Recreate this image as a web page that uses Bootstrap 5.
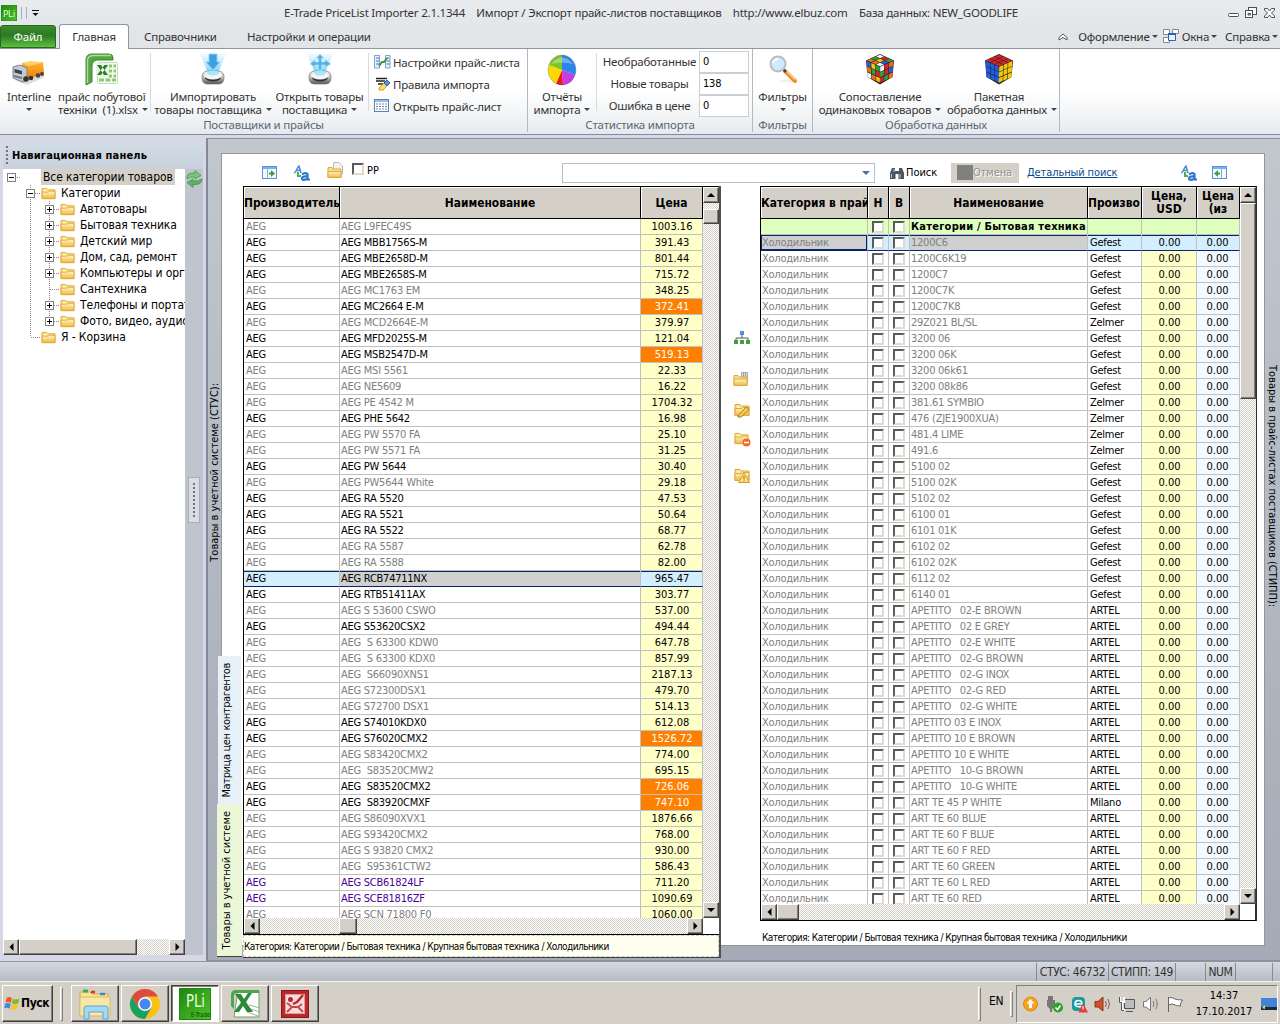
<!DOCTYPE html>
<html lang="ru">
<head>
  <meta charset="UTF-8" />
  <meta name="viewport" content="width=device-width, initial-scale=1" />
  <title>E-Trade PriceList Importer</title>
  <link href="https://cdn.jsdelivr.net/npm/bootstrap@5.3.0/dist/css/bootstrap.min.css" rel="stylesheet" />
  <style>
    body { width: 1280px; height: 1024px; overflow: hidden; background: #d4d0c8; color: #000; font: 11px/15px "DejaVu Sans Condensed", "DejaVu Sans", sans-serif; font-stretch: condensed; }
    svg { display: block; flex: none; }
    .ui-font { font-family: "Noto Sans", "Open Sans", sans-serif; font-stretch: normal; font-size: 11.5px; letter-spacing: -.22px; color: #333; white-space: nowrap; }
    .caret { display: inline-block; border: 3px solid transparent; border-top-color: #444; border-bottom: 0; vertical-align: 3px; margin-left: 4px; }

    /* title and ribbon tabs */
    .titlebar { height: 25px; background: linear-gradient(#e9ebee, #e4e7ea); padding: 0 4px 0 1px; }
    .title-text { width: 734px; margin-left: 243px; }
    .tabs-row { height: 24px; background: #e1e5e8; border-bottom: 1px solid #8b97a3; }
    .tab-file { width: 56px; height: 23px; background: linear-gradient(#3d8a2c, #2c7a24 45%, #5cc03c); border: 1px solid #1f6d1c; border-radius: 3px 3px 0 0; color: #fff; line-height: 22px; }
    .tab-main { width: 70px; height: 25px; margin: -1px 0 -1px 3px; background: #fff; border: 1px solid #8b97a3; border-bottom: 0; border-radius: 3px 3px 0 0; line-height: 24px; }
    .ribbon { height: 86px; background: linear-gradient(#fff 50%, #eceff2 90%, #e5e8ec); border-bottom: 1px solid #838d97; }
    .rgroup { border-right: 1px solid #b4b9c0; height: 83px; flex: none; }
    .rgroup-items { height: 69px; }
    .rgroup-items > * { flex: none; }
    .rgroup-title { line-height: 13px; color: #5c6670; text-align: center; }
    .rbtn { text-align: center; line-height: 13px; padding-top: 4px; }
    .rbtn svg { margin: 0 auto 3px; height: 34px; }
    .rsep { width: 1px; height: 58px; margin-top: 4px; background: #d9dcdf; }
    .rline { height: 22px; gap: 2px; }
    .rinput { width: 50px; height: 22px; border: 1px solid #ccced2; background: #fff; color: #000; line-height: 20px; padding-left: 3px; font-family: "DejaVu Sans Condensed", "DejaVu Sans"; font-size: 11px; }

    /* classic controls */
    .raised { background: #d4d0c8; border: 1px solid; border-color: #fff #404040 #404040 #fff; box-shadow: inset -1px -1px #808080; }
    .track { background: repeating-conic-gradient(#fff 0 25%, #d4d0c8 0 50%) 0 0 / 2px 2px; }
    .sb-btn { width: 16px; height: 16px; flex: none; display: flex; align-items: center; justify-content: center; }
    .cbx { display: inline-block; width: 12px; height: 12px; border: 2px solid; border-color: #5a5a5a #dedbd5 #dedbd5 #5a5a5a; background: #fff; flex: none; }

    /* navigation */
    .workspace { height: 826px; background: #d8d7e6; }
    .nav-side { width: 203px; padding: 6px 0 6px 3px; }
    .nav-head { height: 28px; background: linear-gradient(#d3dde6, #c8d1dc); font-weight: bold; padding-left: 3px; letter-spacing: .17px; }
    .grip { width: 2px; height: 19px; margin-right: 4px; background: repeating-linear-gradient(#6d7480 0 2px, transparent 2px 4px); }
    .tree { width: 182px; height: 770px; background: #fff; overflow: hidden; white-space: nowrap; font-size: 12px; letter-spacing: -.1px; }
    .tree-row { height: 16px; line-height: 16px; }
    .tcell { width: 19px; height: 16px; flex: none; display: flex; align-items: center; justify-content: center; }
    .tcell.v { background: repeating-linear-gradient(#888 0 1px, transparent 1px 2px) 9px 0 / 1px 16px no-repeat; }
    .tcell.h { background: repeating-linear-gradient(90deg, #888 0 1px, transparent 1px 2px) 10px 8px / 10px 1px no-repeat; }
    .tcell.vh { background: repeating-linear-gradient(#888 0 1px, transparent 1px 2px) 9px 0 / 1px 16px no-repeat, repeating-linear-gradient(90deg, #888 0 1px, transparent 1px 2px) 10px 8px / 10px 1px no-repeat; }
    .tcell.end { background: repeating-linear-gradient(#888 0 1px, transparent 1px 2px) 9px 0 / 1px 8px no-repeat, repeating-linear-gradient(90deg, #888 0 1px, transparent 1px 2px) 10px 8px / 10px 1px no-repeat; }
    .side-strip { width: 18px; background: #c0c4ce; }

    /* mdi area */
    .mdi { margin-top: 3px; height: 823px; width: 1074px; border: 1px solid #8b909a; border-left: 2px solid #82879a; border-right: 0; background: linear-gradient(#c0c7cd, #b0b6c0 60%, #a4abb6); }
    .vtext { writing-mode: vertical-rl; white-space: nowrap; line-height: 14px; }
    .up { transform: rotate(180deg); }
    .page { width: 1044px; height: 793px; margin-top: 14px; background: #fff; border: 1px solid #969696; }
    .page-tools { height: 32px; }
    .combo { width: 313px; height: 20px; border: 1px solid #bcbcbc; border-right-color: #a9c4e6; }
    .btn-cancel { width: 68px; height: 20px; background: #d4d0c8; color: #909090; text-shadow: 1px 1px #fff; letter-spacing: -.1px; }
    .side-tabs { width: 21px; height: 772px; }
    .side-tab { position: relative; margin-left: -5px; width: 25px; color: #000; padding-right: 5px; }
    .pane-left { width: 478px; height: 772px; border-right: 2px solid #505050; border-bottom: 1px solid #404040; background: #fff; }
    .gridbox { border: 1px solid #000; border-right: 0; background: #fff; }
    .grid-view { overflow: hidden; flex: none; }
    .goods { table-layout: fixed; border-collapse: separate; border-spacing: 0; white-space: nowrap; line-height: 15px; }
    .goods th { height: 32px; padding: 1px 0 0; background: #d4d0c8; border-right: 1px solid #000; border-bottom: 1px solid #000; box-shadow: inset 1px 1px #fff; text-align: center; overflow: hidden; line-height: 13px; font-size: 11.9px; }
    .goods td { height: 16px; padding: 0 0 0 1px; border-right: 1px solid #c0c0c0; border-bottom: 1px solid #c0c0c0; overflow: hidden; letter-spacing: -.25px; }
    .goods td.maker { padding-left: 2px; }
    .goods .cb { padding: 0; text-align: center; line-height: 0; }
    .goods .num { text-align: center; background: #ffffc8; letter-spacing: 0; }
    .goods .num2 { text-align: center; background: #f3faff; letter-spacing: 0; padding-right: 2px; }
    .goods .dim { color: #808080; }
    .goods .violet { color: #4b0096; }
    .goods .hot { background: #ff8000; color: #fff; }
    .goods .cat td { background: #dfffbf; letter-spacing: .24px; }
    .goods .sel td { background: #d3eefe; border-bottom-color: #0a246a; box-shadow: inset 0 1px #0a246a; }
    .goods .sel td.shade { background: #d0d0d0; }
    .goods .sel td.shade:first-child { box-shadow: inset 1px 1px #0a246a, inset -1px -1px #0a246a; }
    .foot-left { height: 22px; background: #fffff0; border: 1px dashed #c8c8c8; line-height: 22px; }
    .foot-text { font-size: 10px; letter-spacing: -.54px; white-space: nowrap; }
    .mid-tools { width: 39px; padding-left: 13px; }

    /* status bar and taskbar */
    .statusbar { height: 21px; background: linear-gradient(#d5d9e0, #b6bcc4); border-top: 1px solid #8e96a5; border-bottom: 1px solid #f4f3f0; font-size: 12px; letter-spacing: -.4px; color: #333; }
    .scell { height: 18px; border-left: 1px solid #858b95; line-height: 18px; text-align: center; }
    .taskbar { height: 42px; background: #d4d0c8; padding: 3px 2px 2px; }
    .task { width: 48px; height: 37px; display: flex; align-items: center; justify-content: center; }
    .task-on { background: #fff; border: 1px solid; border-color: #404040 #fff #fff #404040; box-shadow: inset 1px 1px #808080; }
    .tdiv { width: 3px; height: 34px; border: 1px solid; border-color: #fff #808080 #808080 #fff; }
    .tray { width: 262px; height: 38px; border: 1px solid; border-color: #808080 #fff #fff #808080; }
  </style>
</head>
<body class="d-flex flex-column">

  <!-- Shared icons -->
  <svg width="0" height="0" style="position:absolute">
    <defs>
      <linearGradient id="gFold" x2="0" y2="1"><stop offset="0" stop-color="#fff6c8" /><stop offset="1" stop-color="#f0b93a" /></linearGradient>
      <linearGradient id="gBeam" x2="0" y2="1"><stop offset="0" stop-color="#dff3fd" stop-opacity=".5" /><stop offset="1" stop-color="#6cd0f8" /></linearGradient>
      <linearGradient id="gChrome" x2="0" y2="1"><stop offset="0" stop-color="#f4f4f4" /><stop offset=".5" stop-color="#bbb" /><stop offset="1" stop-color="#555" /></linearGradient>
      <linearGradient id="gGreen" x2="1" y2="1"><stop offset="0" stop-color="#23860f" /><stop offset="1" stop-color="#4ec22c" /></linearGradient>
      <linearGradient id="gTruck" x2="0" y2="1"><stop offset="0" stop-color="#ffb52c" /><stop offset="1" stop-color="#ef7c08" /></linearGradient>
      <symbol id="folder" viewBox="0 0 16 14"><path d="M1 12.5V1.5H6L7.5 3H15V12.5Z" fill="#fbe08a" stroke="#e3a83c" /><path d="M1 5.5H8L9 4.5H15V12.5H1Z" fill="url(#gFold)" stroke="#e3a83c" /><path d="M3 4H6" stroke="#fff" /></symbol>
      <symbol id="sorticon" viewBox="0 0 16 16"><path d="M0 8C3 7 3 2 5 1L7 8M1.5 5.5H7" fill="none" stroke="#4d8fd6" stroke-width="1.6" /><path d="M4 7V11H7" fill="none" stroke="#52b04a" stroke-width="2" /><path d="M8 9.5Q11 7 13.5 9V14.5H16M13 11.5Q8 11 8 13.5T13 14" fill="none" stroke="#2f74d0" stroke-width="2.2" /></symbol>
      <symbol id="beambase" viewBox="0 0 34 34"><path d="M4 1H30L22 20H12Z" fill="url(#gBeam)" /><path d="M6 24Q6 19 11 18H23Q28 19 28 24Q28 31 23 31H11Q6 31 6 24Z" fill="url(#gChrome)" stroke="#777" stroke-width=".7" /><ellipse cx="17" cy="24.5" rx="8" ry="4" fill="#333" /><ellipse cx="17" cy="22.5" rx="9" ry="4" fill="#f5f5f5" /><ellipse cx="17" cy="20" rx="6" ry="2.5" fill="#a8e6fc" /></symbol>
      <symbol id="pli" viewBox="0 0 32 32"><rect width="32" height="32" fill="#178a10" /><rect x="1" y="1" width="30" height="30" fill="url(#gGreen)" /></symbol>
    </defs>
  </svg>

  <!-- Title bar -->
  <div class="titlebar d-flex align-items-center ui-font">
    <svg width="16" height="16" viewBox="0 0 16 16"><use href="#pli" /><text x="2" y="12" font-size="9.5" fill="#dfffcf" font-family="DejaVu Sans Condensed" textLength="12" lengthAdjust="spacingAndGlyphs">PLi</text></svg>
    <svg width="24" height="14" viewBox="0 0 24 14"><path d="M4.500 1V13M9.500 1V13" stroke="#aab" /><path d="M15 4.500H22" stroke="#111" /><path d="M15.500 7H21.500L18.500 10Z" fill="#111" /></svg>
    <div class="title-text d-flex justify-content-between"><span>E-Trade PriceList Importer 2.1.1344</span><span>Импорт / Экспорт прайс-листов поставщиков</span><span>http://www.elbuz.com</span><span>База данных: NEW_GOODLIFE</span></div>
    <svg class="ms-auto" width="50" height="14" viewBox="0 0 50 14" fill="#fff" stroke="#4a4f58"><rect x="2.500" y="7.500" width="10" height="3" rx="1" /><rect x="22.500" y="1.500" width="8" height="7" /><rect x="19.500" y="4.500" width="7" height="7" /><path d="M22 7.500H24.500V9H22Z" /><path d="M38.500 2.500H41.500L43.500 5L45.500 2.500H48.500V4L45.500 7L48.500 10V11.500H45.500L43.500 9L41.500 11.500H38.500V10L41.500 7L38.500 4Z" /></svg>
  </div>

  <!-- Ribbon tabs -->
  <div class="tabs-row d-flex ui-font">
    <div class="tab-file text-center">Файл</div>
    <div class="tab-main text-center">Главная</div>
    <div class="d-flex align-items-center"><span style="width:103px;margin-left:15px">Справочники</span><span>Настройки и операции</span></div>
    <div class="ms-auto d-flex align-items-center" style="padding-right:2px">
      <svg width="10" height="8" viewBox="0 0 10 8"><path d="M1 4.500L5 1L9 4.500V7L5 4.500L1 7Z" fill="#fff" stroke="#555" /></svg>
      <span style="margin-left:10px">Оформление<i class="caret" style="margin-left:2px"></i></span>
      <svg style="margin:0 3px 0 5px" width="16" height="15" viewBox="0 0 16 15" fill="#fff"><path d="M.5 .5H6.500V5.500H.5ZM9.500 .5H15.500V4.500H9.500ZM.5 8.500H6.500V13.500H.5Z" stroke="#888" /><path d="M5.500 4.500H12.500V11.500H5.500Z" fill="#eaf1fb" stroke="#2c62b4" /><path d="M5 5H13" stroke="#2c62b4" stroke-width="2" /></svg>
      <span>Окна<i class="caret" style="margin-left:2px"></i></span><span style="margin-left:8px">Справка<i class="caret" style="margin-left:2px"></i></span>
    </div>
  </div>

  <!-- Ribbon -->
  <div class="ribbon d-flex ui-font">
    <div class="rgroup" style="width:528px">
      <div class="rgroup-items d-flex">
        <div class="rbtn" style="width:58px">
          <svg width="34" viewBox="0 0 34 34"><path d="M2 27L15 32L33 24L30 22Z" fill="#0002" /><path d="M10 10L31 9L32 20L17 26L10 22Z" fill="url(#gTruck)" /><path d="M10 10L17 13L32 9.500L18 8Z" fill="#ffcf62" /><path d="M1 14L8 12L15 15V27L11 29L1 25Z" fill="#c3cad2" stroke="#78818c" /><path d="M2.500 16L10 18V21.500L2.500 19.500Z" fill="#39424f" /><path d="M2 22L10 24V26L2 24Z" fill="#69727e" /><circle cx="14" cy="26" r="2.800" fill="#333" /><circle cx="19" cy="25" r="2.300" fill="#333" /><circle cx="26" cy="22.500" r="2.300" fill="#444" /><circle cx="30" cy="21" r="2" fill="#444" /></svg>
          Interline<br><i class="caret m-0"></i>
        </div>
        <div class="rbtn" style="width:87px">
          <svg width="34" viewBox="0 0 34 34"><rect x="12.500" y="9.500" width="20" height="21" rx="1" fill="#f6fbf3" stroke="#c5dcbc" /><path d="M22 13H31M22 18H31M22 23H31M14 27H31" stroke="#8ecb70" stroke-width="3" stroke-dasharray="5 1.500" /><path d="M1 32V7Q1 1 7 1H24Q28 1 28 5V7H12Q7 8 7 13V29Z" fill="#57a544" stroke="#3c8a2e" /><path d="M2.500 30V7Q3 3 8 2.500H26" fill="none" stroke="#a9dc93" stroke-width="1.500" /><path d="M11 10H24V25L11 23Z" fill="#e9f5e3" /><path d="M12 12H16L23 22H19ZM23 12H19.500L12 22H16Z" fill="#2f7d2b" /></svg>
          прайс побутової<br>техніки&nbsp; (1).xlsx<i class="caret"></i>
        </div>
        <div class="rsep" style="margin-left:5px"></div>
        <div class="rbtn" style="width:122px;margin-left:1px">
          <svg width="34" viewBox="0 0 34 34"><use href="#beambase" /><path d="M13 1H21V9H24L17 17L10 9H13Z" fill="#3d9fe0" stroke="#8fd0f6" /></svg>
          Импортировать<br>товары поставщика<i class="caret"></i>
        </div>
        <div class="rbtn" style="width:91px">
          <svg width="34" viewBox="0 0 34 34"><use href="#beambase" /><path d="M17 1L21 5.500H18.500V9H22V6.500L28 11L22 14V12H18.500V17H15.500V12H12V14L7 11L12 6.500V9H15.500V5.500H13Z" fill="#55b2e8" stroke="#b8e4fa" stroke-width=".6" /></svg>
          Открыть товары<br>поставщика<i class="caret"></i>
        </div>
        <div class="rsep" style="margin-left:3px"></div>
        <div style="margin:2px 0 0 5px">
          <div class="rline d-flex align-items-center"><svg width="17" height="16" viewBox="0 0 17 16"><path d="M.5 1.500H5.500V14H.5ZM11.500 1.500H16V14H11.500Z" fill="#e8f1fb" stroke="#7da3d3" /><path d="M2 4H5M2 7H5M2 10H5M12.500 4H15.500M12.500 7H15.500M12.500 10H15.500" stroke="#4a79b7" /><path d="M5 12L8 8L10 8L13 4" fill="none" stroke="#3b9a3b" stroke-width="2" /></svg><span>Настройки прайс-листа</span></div>
          <div class="rline d-flex align-items-center"><svg width="17" height="16" viewBox="0 0 17 16"><path d="M2 2.500H13M2 5H11M4 8H9" stroke="#222" stroke-width="1.300" /><path d="M5 12L10 7L13 10L9 14H5Z" fill="#fbd968" stroke="#d99b28" /><path d="M10 7L13 4L16 7L13 10Z" fill="#5d93dc" stroke="#2e5fa8" /></svg><span>Правила импорта</span></div>
          <div class="rline d-flex align-items-center"><svg width="17" height="14" viewBox="0 0 17 14"><rect x=".5" y=".5" width="14" height="12" fill="#fff" stroke="#5a82b8" /><path d="M1 2H14" stroke="#9dbce4" stroke-width="2" /><path d="M2 5H13M2 7.500H13M2 10H13" stroke="#6f87a7" stroke-width="1.200" stroke-dasharray="2 1" /></svg><span>Открыть прайс-лист</span></div>
        </div>
      </div>
      <div class="rgroup-title">Поставщики и прайсы</div>
    </div>
    <div class="rgroup" style="width:225px">
      <div class="rgroup-items d-flex">
        <div class="rbtn" style="width:68px">
          <svg width="34" viewBox="-17 -17 34 34"><path d="M0 0V-15A14 15 0 0 1 13 5Z" fill="#2a86e8" /><path d="M0 0L13 5A14 15 0 0 1 1 15Z" fill="#c63ce8" /><path d="M0 0L1 15A14 15 0 0 1-6 13.500Z" fill="#e81c1c" /><path d="M0 0L-6 13.500A14 15 0 0 1-13-5Z" fill="#ffd800" /><path d="M0 0L-13-5A14 15 0 0 1 0-15Z" fill="#7cc42a" /><ellipse rx="14" ry="15" fill="none" stroke="#0003" /><path d="M-11-6Q0-19 11-6Q0-9-11-6Z" fill="#fff5" /></svg>
          Отчёты<br>импорта<i class="caret"></i>
        </div>
        <div class="rsep" style="margin-right:3px"></div>
        <div class="text-center" style="width:99px;padding-top:2px"><div class="rline" style="line-height:22px">Необработанные</div><div class="rline" style="line-height:22px">Новые товары</div><div class="rline" style="line-height:22px">Ошибка в цене</div></div>
        <div style="padding-top:2px"><div class="rinput">0</div><div class="rinput">138</div><div class="rinput">0</div></div>
      </div>
      <div class="rgroup-title">Статистика импорта</div>
    </div>
    <div class="rgroup" style="width:60px">
      <div class="rgroup-items">
        <div class="rbtn">
          <svg width="34" viewBox="0 0 34 34"><path d="M12 28Q22 31 30 28L24 26Z" fill="#0001" /><path d="M19 18L29 28" stroke="#e8922c" stroke-width="4" stroke-linecap="round" /><path d="M20 17.500L29 26.500" stroke="#ffd28a" stroke-width="1.200" /><path d="M16 15L20 19" stroke="#444" stroke-width="2.500" /><circle cx="12" cy="11" r="7.500" fill="#cfeafa" stroke="#b5bcc4" stroke-width="2" /><path d="M7 10Q8 6 12 6" stroke="#fff" stroke-width="2" fill="none" /></svg>
          Фильтры<br><i class="caret m-0"></i>
        </div>
      </div>
      <div class="rgroup-title">Фильтры</div>
    </div>
    <div class="rgroup" style="width:247px">
      <div class="rgroup-items d-flex">
        <div class="rbtn" style="width:134px"><svg width="34" viewBox="-3 -1 34 34" id="cube-mixed"></svg>Сопоставление<br>одинаковых товаров<i class="caret"></i></div>
        <div class="rbtn" style="width:104px"><svg width="34" viewBox="-3 -1 34 34" id="cube-solved"></svg>Пакетная<br>обработка данных<i class="caret"></i></div>
      </div>
      <div class="rgroup-title">Обработка данных</div>
    </div>
  </div>

  <!-- Workspace -->
  <div class="workspace d-flex">
    <div class="nav-side">
      <div class="nav-head d-flex align-items-center"><span class="grip"></span>Навигационная панель</div>
      <div class="d-flex">
        <div>
          <div class="tree" id="tree"></div>
          <div class="track d-flex" style="width:182px;height:16px"><div class="raised sb-btn"><svg width="5" height="8"><path d="M4.500 0V8L.5 4Z" /></svg></div><div class="raised" style="width:118px"></div><div class="raised sb-btn ms-auto"><svg width="5" height="8"><path d="M.5 0V8L4.500 4Z" /></svg></div></div>
        </div>
        <div class="side-strip">
          <svg width="18" height="20" viewBox="0 0 18 20"><path d="M2 10Q1 4 8 4H10V1.500L16 6.500L10 10V8Q5 7.500 2 10Z" fill="#7cc47a" stroke="#3f9a4a" stroke-width=".8" /><path d="M17 10Q17 15.500 10 15.500H8V18.500L2 13.500L8 10V12Q13 12.500 17 10Z" fill="#5db164" stroke="#3f9a4a" stroke-width=".8" /></svg>
          <div class="d-flex align-items-center justify-content-center" style="width:12px;height:46px;margin:288px 0 0 3px;background:#dcdde4;border:1px solid #aaaebb"><span class="grip m-0" style="height:34px"></span></div>
        </div>
      </div>
    </div>
    <div style="width:3px"></div>

    <div class="mdi d-flex">
      <div class="d-flex align-items-center" style="width:13px"><span class="vtext up" style="margin-top:-154px">Товары в учетной системе (СТУС):</span></div>

      <div class="page">
        <!-- Search and tools row -->
        <div class="page-tools d-flex align-items-center" style="padding-top:5px">
          <svg style="margin-left:40px" width="15" height="13" viewBox="0 0 15 13"><rect x=".5" y=".5" width="14" height="12" fill="#f4f9ff" stroke="#5a93d0" /><path d="M1 2H14" stroke="#79b1ec" stroke-width="2" /><path d="M5.500 3V12" stroke="#79b1ec" /><path d="M7 6.500H9V4L13 7.500L9 11V8.500H7Z" fill="#3f9d3f" /></svg>
          <svg style="margin-left:17px" width="16" height="16"><use href="#sorticon" /></svg>
          <svg style="margin-left:17px;margin-top:-4px" width="17" height="17" viewBox="0 0 17 17"><path d="M6.500 .5H12L15.500 4V12H6.500Z" fill="#f3f3f3" stroke="#bbb" /><path d="M1 15.500V5.500H5L6 7H14V15.500Z" fill="#fbe08a" stroke="#e3a83c" /><path d="M1 9.500H14V15.500H1Z" fill="url(#gFold)" stroke="#e3a83c" /></svg>
          <span class="cbx" style="margin:-7px 3px 0 8px"></span><span style="margin-top:-5px">PP</span>
          <div class="combo d-flex align-items-center" style="margin-left:183px"><i class="caret ms-auto me-1" style="border-width:4px 4px 0;border-top-color:#4a6ea8"></i></div>
          <svg style="margin-left:15px" width="14" height="14" viewBox="0 0 14 14"><path d="M2 2H5V5H9V2H12L14 7V13H8.500V8H5.500V13H0V7Z" fill="#4a5560" /><path d="M1.500 8V12M10 8V12M4 3V6" stroke="#b5c5d5" /></svg>
          <span style="margin-left:2px;width:45px">Поиск</span>
          <div class="btn-cancel d-flex align-items-center"><span style="width:16px;height:15px;margin-left:6px;background:#808080"></span>Отмена</div>
          <a href="#" style="margin-left:8px;color:#0a4a90;letter-spacing:-.1px">Детальный поиск</a>
          <svg style="margin-left:auto" width="16" height="16"><use href="#sorticon" /></svg>
          <svg style="margin:0 37px 0 15px" width="15" height="13" viewBox="0 0 15 13"><rect x=".5" y=".5" width="14" height="12" fill="#f4f9ff" stroke="#5a93d0" /><path d="M1 2H14" stroke="#79b1ec" stroke-width="2" /><path d="M9.500 3V12" stroke="#79b1ec" /><path d="M8 8.500H6V11L2 7.500L6 4V6.500H8Z" fill="#3f9d3f" /></svg>
        </div>

        <div class="d-flex">
          <div class="side-tabs">
            <div class="side-tab d-flex align-items-center justify-content-center" style="margin-top:470px;height:148px;background:#e8f1f7;width:23px;margin-left:-4px"><span class="vtext up" style="letter-spacing:-.37px">Матрица цен контрагентов</span></div>
            <div class="side-tab d-flex align-items-center justify-content-center" style="height:153px;background:#ecf7d8;border-bottom:1px solid #404040"><span class="vtext up">Товары в учетной системе</span></div>
          </div>
          <div class="pane-left">
            <div class="gridbox" style="height:749px">
              <div class="d-flex">
                <div class="grid-view" style="width:459px;height:731px">
                  <table class="goods" style="width:459px">
                    <colgroup><col style="width:96px"><col style="width:301px"><col style="width:62px"></colgroup>
                    <thead><tr><th>Производитель</th><th>Наименование</th><th>Цена</th></tr></thead>
                    <tbody id="goods-own"></tbody>
                  </table>
                </div>
                <div class="track d-flex flex-column" style="width:16px;height:731px"><div class="raised sb-btn"><svg width="8" height="4"><path d="M0 4H8L4 0Z" /></svg></div><div class="raised" style="height:15px;margin-top:6px"></div><div class="raised sb-btn mt-auto"><svg width="8" height="4"><path d="M0 0H8L4 4Z" /></svg></div></div>
              </div>
              <div class="track d-flex" style="width:459px;height:16px"><div class="raised sb-btn"><svg width="5" height="8"><path d="M4.500 0V8L.5 4Z" /></svg></div><div class="raised" style="width:18px;margin-left:79px"></div><div class="raised sb-btn ms-auto"><svg width="5" height="8"><path d="M.5 0V8L4.500 4Z" /></svg></div></div>
            </div>
            <div class="foot-left foot-text">Категория: Категории / Бытовая техника / Крупная бытовая техника / Холодильники</div>
          </div>
          <div class="mid-tools">
            <svg style="margin-top:145px" width="16" height="14" viewBox="0 0 16 14"><rect x="6" width="4" height="4" fill="#4f8fe0" /><path d="M8 4V7M2 9V7H14V9" fill="none" stroke="#555" /><path d="M0 9H4V13H0ZM6 9H10V13H6ZM12 9H16V13H12Z" fill="#3da03a" /></svg>
            <svg style="margin-top:25px;margin-left:-1px" width="17" height="17" viewBox="0 0 17 17"><path d="M8.500 2.500H14.500V12H8.500Z" fill="#ddd" stroke="#aaa" /><path d="M10.500 3V8M12.500 3V8" stroke="#999" /><path d="M1 15.500V5.500H5L6 7H14V15.500Z" fill="#fbe08a" stroke="#e3a83c" /><path d="M1 9H14V15.500H1Z" fill="url(#gFold)" stroke="#e3a83c" /></svg>
            <svg style="margin-top:16px" width="17" height="15" viewBox="0 0 17 15"><use href="#folder" width="16" height="14" /><path d="M4 13L12 4L15 6.500L7 14H4Z" fill="#f6cc58" stroke="#a8781c" /></svg>
            <svg style="margin-top:14px" width="17" height="15" viewBox="0 0 17 15"><use href="#folder" width="15" height="13" /><circle cx="12.500" cy="10.500" r="4" fill="#ee6a2c" /><path d="M10 10.500H15" stroke="#fff" stroke-width="1.500" /></svg>
            <svg style="margin-top:21px" width="17" height="15" viewBox="0 0 17 15"><use href="#folder" width="16" height="14" /><path d="M10 5L15.500 14.500H4.500Z" fill="#ffe37a" stroke="#d79a20" /><path d="M10 8V11.500M10 12.500V13.500" stroke="#765" /></svg>
          </div>
          <div style="width:497px">
            <div class="gridbox" style="height:735px;border-right:2px solid #303030">
              <div class="d-flex">
                <div class="grid-view" style="width:479px;height:717px">
                  <table class="goods" style="width:479px">
                    <colgroup><col style="width:107px"><col style="width:21px"><col style="width:21px"><col style="width:178px"><col style="width:54px"><col style="width:55px"><col style="width:43px"></colgroup>
                    <thead><tr><th class="text-start">Категория в прай</th><th>Н</th><th>В</th><th>Наименование</th><th class="text-start">Произво</th><th>Цена,<br>USD</th><th>Цена<br>(из</th></tr></thead>
                    <tbody id="goods-price"></tbody>
                  </table>
                </div>
                <div class="track d-flex flex-column" style="width:16px;height:717px"><div class="raised sb-btn"><svg width="8" height="4"><path d="M0 4H8L4 0Z" /></svg></div><div class="raised" style="height:196px"></div><div class="raised sb-btn mt-auto"><svg width="8" height="4"><path d="M0 0H8L4 4Z" /></svg></div></div>
              </div>
              <div class="track d-flex" style="width:479px;height:16px"><div class="raised sb-btn"><svg width="5" height="8"><path d="M4.500 0V8L.5 4Z" /></svg></div><div class="raised" style="width:22px"></div><div class="raised sb-btn ms-auto"><svg width="5" height="8"><path d="M.5 0V8L4.500 4Z" /></svg></div></div>
            </div>
            <div class="foot-text" style="padding:9px 0 0 2px">Категория: Категории / Бытовая техника / Крупная бытовая техника / Холодильники</div>
          </div>
        </div>
      </div>
      <div class="d-flex align-items-center" style="width:15px"><span class="vtext" style="margin-top:-126px">Товары в прайс-листах поставщиков (СТИПП):</span></div>
    </div>
  </div>

  <!-- Status bar -->
  <div class="statusbar d-flex justify-content-end align-items-center">
    <div class="scell" style="width:72px">СТУС: 46732</div><div class="scell" style="width:67px">СТИПП: 149</div><div class="scell" style="width:30px"></div><div class="scell" style="width:30px">NUM</div><div class="scell" style="width:37px"></div><div class="scell" style="width:8px"></div>
  </div>

  <!-- Taskbar -->
  <div class="taskbar d-flex align-items-center">
    <div class="raised d-flex align-items-center fw-bold" style="width:51px;height:37px;padding-left:1px;font-size:12px;letter-spacing:-.4px">
      <svg width="17" height="17" viewBox="0 0 16 16"><path d="M2.500 2.500Q5 1 7.500 3L6.500 7.500Q4 6 1.500 7Z" fill="#ee5a24" /><path d="M8.500 3.500Q11 5 14.500 3L13.500 7.500Q11 9.500 7.500 8Z" fill="#7fba28" /><path d="M1.200 8Q4 7 6.300 8.500L5.300 13Q3 11.500 .2 12.500Z" fill="#3a8ee0" /><path d="M7.300 9Q10 10.500 13.300 8.500L12.300 13Q9.500 15 6.300 13.500Z" fill="#fcc41c" /></svg>Пуск
    </div>
    <div class="tdiv" style="margin:0 8px 0 7px"></div>
    <div class="d-flex" style="gap:2px">
      <div class="raised task"><svg width="34" height="34" viewBox="0 0 34 34"><path d="M2 5H12L14 7H30V27H2Z" fill="#f8e49a" stroke="#cfa94a" /><path d="M5 4H10" stroke-width="3" stroke="#3fae3f" /><path d="M13 5H17" stroke="#d33" stroke-width="2.500" /><path d="M22 7H27" stroke="#38c" stroke-width="2.500" /><path d="M2 10H32V29H2Z" fill="#f9e8a5" stroke="#dcbb60" /><path d="M6 32V21Q6 19 8 19H28Q30 19 30 21V32H25V25H11V32Z" fill="#a5d8f2" stroke="#5ba6cf" /></svg></div>
      <div class="raised task"><svg width="32" height="32" viewBox="-16 -16 32 32"><circle r="15" fill="#fbc116" /><path d="M0 0L-13-7.500A15 15 0 0 1 13-7.500H0Z" fill="#dd4b3e" /><path d="M-13-7.500A15 15 0 0 0 0 15L6.500 3.500L-6.500 3.500Z" fill="#1aa15f" /><path d="M-13-7.500L-6 4L0 0L0-7.500H13Z" fill="#dd4b3e" /><circle r="7" fill="#fff" /><circle r="5.500" fill="#4587f3" /></svg></div>
      <div class="task-on task"><svg width="32" height="32" viewBox="0 0 32 32"><use href="#pli" /><text x="7" y="19" font-size="17" fill="#e4ffd8" font-family="DejaVu Sans Condensed" textLength="19" lengthAdjust="spacingAndGlyphs">PLi</text><text x="12" y="29" font-size="7" fill="#0a3a06" font-family="DejaVu Sans Condensed" textLength="19" lengthAdjust="spacingAndGlyphs">E-Trade</text></svg></div>
      <div class="raised task"><svg width="32" height="32" viewBox="0 0 32 32"><path d="M9 3H30V29H5Z" fill="#fff" stroke="#63a763" /><path d="M20 17L31 20M18 20L31 24M18 24L29 28" stroke="#9ab79a" /><path d="M2 7Q2 2 7 2H30V5H8Q5 5 5 8V21L2 18Z" fill="#4ea54e" /><path d="M6 6H12L15 11L19 5H23L17 14L24 24H18L14 18L10 24H5L12 14.500Z" fill="#2c8a38" /></svg></div>
      <div class="raised task"><svg width="30" height="30" viewBox="0 0 30 30"><rect x="1.500" y="1.500" width="27" height="27" fill="#b9282c" stroke="#8c1518" /><rect x="5.500" y="5.500" width="19" height="19" fill="#f6dcdc" stroke="#e89a9a" /><circle cx="10.500" cy="10.500" r="2.500" fill="#b9282c" /><path d="M23 6L17 13L13 15" fill="none" stroke="#b9282c" stroke-width="2.500" /><path d="M7 14L12 18L7 23M22 15L18 18L23 23M11 18H19" fill="none" stroke="#c54548" stroke-width="1.800" /></svg></div>
    </div>
    <div class="ms-auto tdiv"></div>
    <span style="margin:-4px 4px 0 8px;width:17px;font-size:12px;letter-spacing:-.3px">EN</span>
    <div class="tdiv" style="height:26px;margin-right:3px"></div>
    <div class="tray d-flex align-items-center">
      <svg style="margin-left:6px" width="162" height="20" viewBox="0 0 162 20">
        <circle cx="7.500" cy="10" r="7" fill="#f9a11c" stroke="#e4870c" /><path d="M7.500 5L11.500 9.500H9V14H6V9.500H3.500Z" fill="#fff" />
        <path d="M25 2H30V6H32V12L29 15V18H27V15L24 12V6H25Z" fill="#777" /><circle cx="35" cy="13.500" r="5" fill="#2aa52c" /><path d="M32.500 13.500L34.500 15.500L37.500 11.500" fill="none" stroke="#fff" stroke-width="1.500" />
        <rect x="49" y="3" width="13" height="14" rx="4" fill="#1b9aa0" /><path d="M52 10H59Q59 6.500 55.500 6.500T52 10T58.500 12.500" fill="none" stroke="#fff" stroke-width="1.600" /><path d="M60 9L65 18.500H55.500Z" fill="#e8403a" /><path d="M60 12V15.500" stroke="#fff" />
        <path d="M72 7.500H75L80 3V17L75 13H72Z" fill="#d4502c" stroke="#93341c" /><path d="M82.500 7Q84 10 82.500 13M85 5Q88 10 85 15" fill="none" stroke="#8a5547" />
        <path d="M101.500 5.500H111.500V14.500H101.500ZM103 17.500H110" fill="#b9bcc0" stroke="#555" /><path d="M97 3V8H101V3M99 8V16H102" fill="none" stroke="#fff" stroke-width="2" /><path d="M96.500 3V8.500H98.500V16.500H101" fill="none" stroke="#555" />
        <path d="M120.500 7.500H123L127.500 3.500V16.500L123 13H120.500Z" fill="#fff" stroke="#777" /><path d="M130 7Q132 10 130 13M132.500 5Q136 10 132.500 15" fill="none" stroke="#777" />
        <path d="M145.500 3V18M145.500 4Q149 2.500 152 5Q155 6 159.500 6Q157 9 157.500 12Q153 12 151 10.500Q148 9.500 145.500 11" fill="#fff" stroke="#666" />
      </svg>
      <div class="text-center" style="width:74px;line-height:16px;margin-left:2px">14:37<br>17.10.2017</div>
      <svg width="16" height="14" viewBox="0 0 16 14"><rect y="1" width="16" height="12" fill="#3f84d8" /><rect y="10" width="16" height="3" fill="#1a2840" /><path d="M1 11L4 8L4 12Z" fill="#f5d03c" /></svg>
    </div>
  </div>

  <script src="https://cdn.jsdelivr.net/npm/bootstrap@5.3.0/dist/js/bootstrap.bundle.min.js"></script>
  <script>
    // name | price | flags: d = dim, v = violet, h = highlighted price, s = selected
    const own = `AEG L9FEC49S|1003.16|d
AEG MBB1756S-M|391.43|
AEG MBE2658D-M|801.44|
AEG MBE2658S-M|715.72|
AEG MC1763 EM|348.25|d
AEG MC2664 E-M|372.41|h
AEG MCD2664E-M|379.97|d
AEG MFD2025S-M|121.04|
AEG MSB2547D-M|519.13|h
AEG MSI 5561|22.33|d
AEG NE5609|16.22|d
AEG PE 4542 M|1704.32|d
AEG PHE 5642|16.98|
AEG PW 5570 FA|25.10|d
AEG PW 5571 FA|31.25|d
AEG PW 5644|30.40|
AEG PW5644 White|29.18|d
AEG RA 5520|47.53|
AEG RA 5521|50.64|
AEG RA 5522|68.77|
AEG RA 5587|62.78|d
AEG RA 5588|82.00|d
AEG RCB74711NX|965.47|s
AEG RTB51411AX|303.77|
AEG S 53600 CSWO|537.00|d
AEG S53620CSX2|494.44|
AEG  S 63300 KDW0|647.78|d
AEG  S 63300 KDX0|857.99|d
AEG  S66090XNS1|2187.13|d
AEG S72300DSX1|479.70|d
AEG S72700 DSX1|514.13|d
AEG S74010KDX0|612.08|
AEG S76020CMX2|1526.72|h
AEG S83420CMX2|774.00|d
AEG  S83520CMW2|695.15|d
AEG  S83520CMX2|726.06|h
AEG  S83920CMXF|747.10|h
AEG S86090XVX1|1876.66|d
AEG S93420CMX2|768.00|d
AEG S 93820 CMX2|930.00|d
AEG  S95361CTW2|586.43|d
AEG SCB61824LF|711.20|v
AEG SCE81816ZF|1090.69|v
AEG SCN 71800 F0|1060.00|d`.split('\n').map(l => l.split('|'));

    const priceList = {
      Gefest1: ['1200C6', '1200C6K19', '1200C7', '1200C7K', '1200C7K8'],
      Zelmer1: ['29Z021 BL/SL'],
      Gefest2: ['3200 06', '3200 06K', '3200 06k61', '3200 08k86'],
      Zelmer2: ['381.61 SYMBIO', '476 (ZJE1900XUA)', '481.4 LIME', '491.6'],
      Gefest3: ['5100 02', '5100 02K', '5102 02', '6100 01', '6101 01K', '6102 02', '6102 02K', '6112 02', '6140 01'],
      ARTEL1: ['APETITO   02-E BROWN', 'APETITO   02 E GREY', 'APETITO   02-E WHITE', 'APETITO   02-G BROWN', 'APETITO   02-G INOX', 'APETITO   02-G RED', 'APETITO   02-G WHITE', 'APETITO 03 E INOX', 'APETITO 10 E BROWN', 'APETITO 10 E WHITE', 'APETITO   10-G BROWN', 'APETITO   10-G WHITE'],
      Milano1: ['ART TE 45 P WHITE'],
      ARTEL2: ['ART TE 60 BLUE', 'ART TE 60 F BLUE', 'ART TE 60 F RED', 'ART TE 60 GREEN', 'ART TE 60 L RED', 'ART TE 60 RED']
    };

    const sp = s => s.replace(/ {2,}/g, m => '&nbsp;'.repeat(m.length));

    document.getElementById('goods-own').innerHTML = own.map(([name, price, f]) => {
      const cls = f === 'd' ? 'dim' : f === 'v' ? 'violet' : '';
      return `<tr class="${f === 's' ? 'sel' : ''}"><td class="maker ${cls}">AEG</td><td class="${cls} ${f === 's' ? 'shade' : ''}">${sp(name)}</td><td class="num ${f === 'h' ? 'hot' : ''}">${price}</td></tr>`;
    }).join('');

    const cb = '<td class="cb"><span class="cbx"></span></td>';
    let rows = `<tr class="cat"><td></td>${cb}${cb}<td class="fw-bold">Категории / Бытовая техника</td><td></td><td></td><td></td></tr>`;
    let first = true;
    for (const key in priceList) {
      priceList[key].forEach(name => {
        rows += `<tr class="${first ? 'sel' : ''}"><td class="dim shade">Холодильник</td>${cb}${cb}<td class="dim shade">${sp(name)}</td><td class="maker">${key.slice(0, -1)}</td><td class="num">0.00</td><td class="num2">0.00</td></tr>`;
        first = false;
      });
    }
    document.getElementById('goods-price').innerHTML = rows;

    // category tree: cells, box sign, label
    const tree = [
      ['', '-', 'Категории'],
      ['v', '+', 'Автотовары'], ['v', '+', 'Бытовая техника'], ['v', '+', 'Детский мир'], ['v', '+', 'Дом, сад, ремонт'],
      ['v', '+', 'Компьютеры и оргтехника'], ['v', '', 'Сантехника'], ['v', '+', 'Телефоны и портативная'], ['v', '+', 'Фото, видео, аудио'],
      ['', 'end', 'Я - Корзина']
    ];
    const box = s => `<svg width="9" height="9"><rect x=".5" y=".5" width="8" height="8" fill="#fff" stroke="#808080"/><path d="M2 4.500H7${s === '+' ? 'M4.500 2V7' : ''}" stroke="#000"/></svg>`;
    let html = `<div class="tree-row d-flex"><span class="tcell h" style="width:17px">${box('-')}</span><span style="margin-left:21px;padding:0 2px;background:#d4d0c8">Все категории товаров</span></div>`;
    tree.forEach(([v, sign, label], i) => {
      const last = i === 8;
      html += `<div class="tree-row d-flex align-items-center"><span style="width:18px;flex:none"></span>${v ? '<span class="tcell v"></span>' : ''}<span class="tcell ${sign === 'end' || last ? 'end' : 'vh'}">${sign === '+' || sign === '-' ? box(sign) : ''}</span><svg width="15" height="13" style="margin:0 ${v ? 5 : 5}px 0 1px"><use href="#folder"/></svg><span>${label}</span></div>`;
    });
    document.getElementById('tree').innerHTML = html;

    // isometric cube built from three 3x3 faces
    function cube(id, top, left, right) {
      const face = (colors, m) => `<g transform="matrix(${m})">` + [...colors].map((c, i) =>
        `<rect x="${i % 3 + .06}" y="${Math.floor(i / 3) + .06}" width=".88" height=".88" fill="${({ r: '#d8232a', b: '#1f5fe0', y: '#f2c70c', g: '#2f9e3a', o: '#ee6a1c', w: '#f4f4f4' })[c]}"/>`).join('') + '</g>';
      document.getElementById(id).innerHTML = '<path d="M14 0L28 6.500L26.500 23L14 30.500L1.500 23L0 6.500Z" fill="#222"/>' +
        face(top, '4.5,-2,4.5,2,.5,6.5') + face(left, '4.5,2,.2,5.6,.5,6.5') + face(right, '4.5,-2,-.2,5.6,14,12.500');
    }
    cube('cube-mixed', 'ogwoyrwbg', 'bygogrwoy', 'wrogrbrgo');
    cube('cube-solved', 'rrrrrrrrr', 'bbbbbbbbb', 'yyyyyyyyy');
  </script>
</body>
</html>
